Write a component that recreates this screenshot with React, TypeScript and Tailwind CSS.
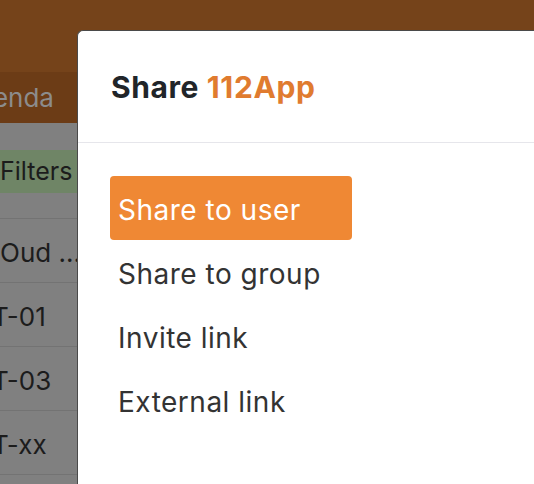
const rows = ["Oud ...", "T-01", "T-03", "T-xx"];
const items = ["Share to user", "Share to group", "Invite link", "External link"];

export default function App() {
  return (
    <div
      className="relative w-[534px] h-[484px] overflow-hidden bg-[#808080]"
      style={{ fontFamily: "Inter, 'Liberation Sans', sans-serif" }}
    >
      {/* page underneath the dimmed overlay */}
      <div className="h-[72px] bg-[#75431a]" />
      <div className="h-[51px] bg-[#6c3c16] flex items-center text-[26px] text-[#8c8c8c] -ml-[41px]">
        Agenda
      </div>
      <div className="h-[27px]" />
      <div className="h-[43px] bg-[#6f8566] flex items-center text-[25px] text-[#1c1c1c]">
        Filters
      </div>
      <div className="h-[26px] border-b border-[#737373]" />
      {rows.map((r, i) => (
        <div
          key={r}
          className={
            i === 0
              ? "h-[64px] pt-[4px] border-b border-[#737373] flex items-center text-[26px] text-[#1c1c1c]"
              : "h-[64px] pt-[4px] border-b border-[#737373] flex items-center text-[26px] text-[#1c1c1c] -ml-[8px]"
          }
        >
          {r}
        </div>
      ))}

      {/* share dialog */}
      <div className="absolute left-[77px] top-[30px] right-0 bottom-0 bg-white rounded-tl-[6px] border-l border-t border-[#4a4a4a]">
        <div className="h-[112px] flex items-center pl-[33px] pt-[1px] border-b border-[#e6e6eb]">
          <h2 className="text-[30px] font-bold text-[#212529] tracking-[0.6px]">
            Share <span className="text-[#e07b2f]">112App</span>
          </h2>
        </div>
        <div className="pt-[33px] pl-[32px]">
          {items.map((it, i) => (
            <div
              key={it}
              className={
                i === 0
                  ? "w-[242px] h-[64px] pt-[3px] flex items-center px-[8px] rounded-[4px] bg-[#ef8834] text-white text-[28px] tracking-[0.5px]"
                  : "w-[242px] h-[64px] pt-[3px] flex items-center px-[8px] text-[#333333] text-[28px] tracking-[0.5px]"
              }
            >
              {it}
            </div>
          ))}
        </div>
      </div>
    </div>
  );
}
